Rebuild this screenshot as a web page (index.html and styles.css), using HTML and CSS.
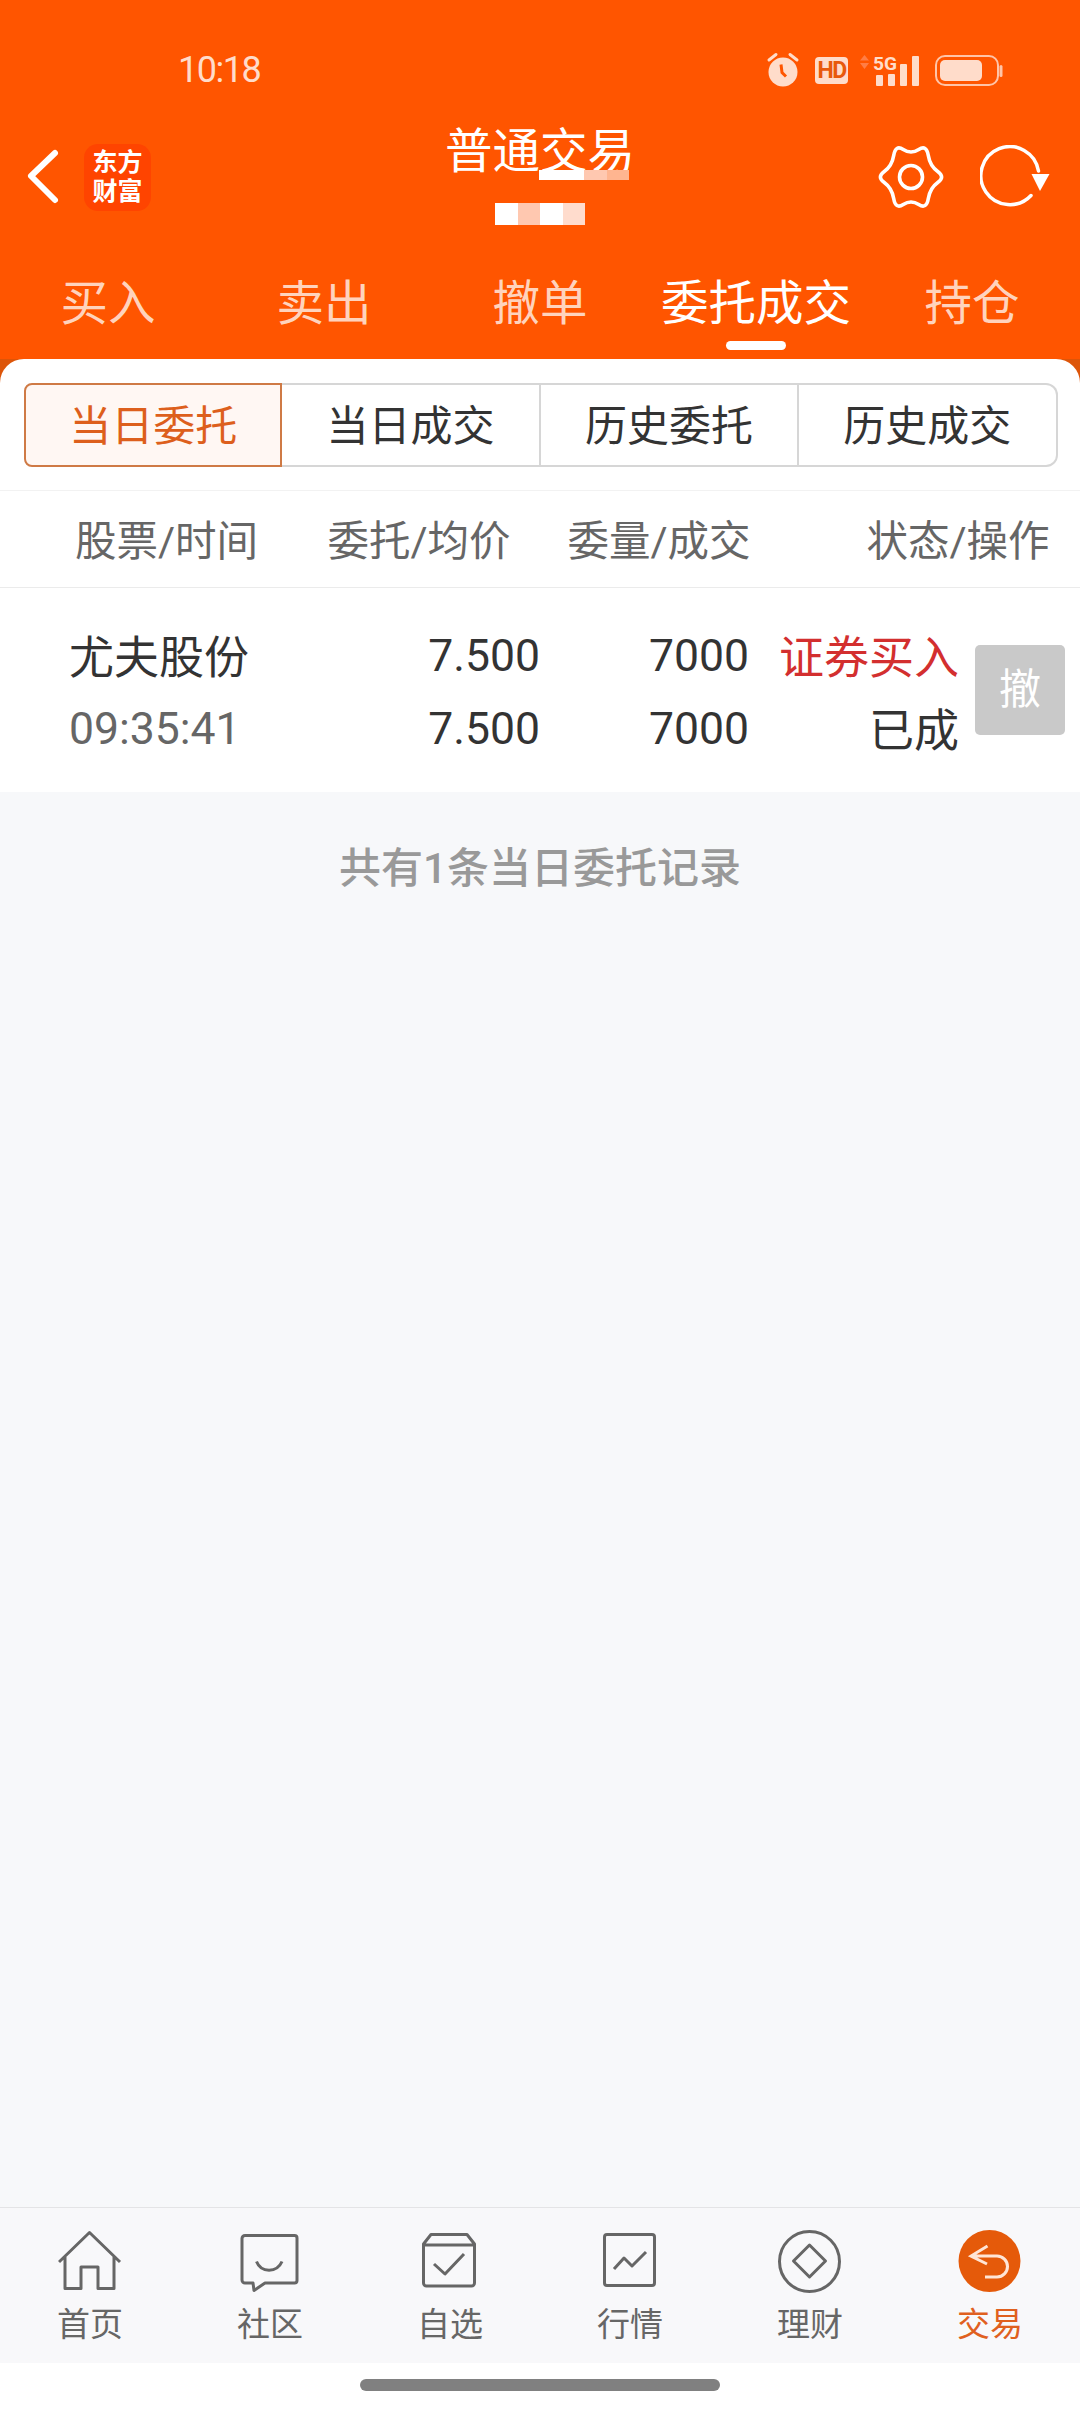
FILE: index.html
```html
<!DOCTYPE html>
<html>
<head>
    <title>普通交易</title>
    <link rel="stylesheet" href="styles.css">
</head>
<body>

<div class="top">
    <div class="status">
        <span class="time">10:18</span>
        <div class="statusIcons">
            <svg class="alarm" width="34" height="36" viewBox="0 0 34 36">
                <circle cx="17" cy="20" r="14.5" fill="#ffdcca"/>
                <path d="M3 8L10 2.5M31 8L24 2.5" stroke="#ffdcca" stroke-width="3" stroke-linecap="round"/>
                <path d="M15 12.5L16 20.5L20 24.5" fill="none" stroke="#ff5500" stroke-width="3"/>
            </svg>
            <span class="hd">HD</span>
            <svg width="60" height="33" viewBox="0 0 60 33">
                <path d="M4.5 1L9 6.5H0zM0 9H9L4.5 15z" fill="#ff7d45"/>
                <text class="fiveG" x="13" y="16" textLength="24" lengthAdjust="spacingAndGlyphs">5G</text>
                <g fill="#ffdcca">
                    <rect x="16" y="21" width="7" height="11" rx="1"/>
                    <rect x="28" y="20" width="7" height="12" rx="1"/>
                    <rect x="40" y="10" width="7" height="22" rx="1"/>
                    <rect x="52" y="2" width="7" height="30" rx="1"/>
                </g>
            </svg>
            <svg class="battery" width="68" height="31" viewBox="0 0 68 31">
                <rect x="1" y="1" width="62" height="29" rx="9" fill="none" stroke="#ffc4a8" stroke-width="2"/>
                <rect x="5" y="5" width="42" height="21" rx="5" fill="#ffdcca"/>
                <rect x="64.5" y="10" width="3" height="12" rx="1.5" fill="#ffc4a8"/>
            </svg>
        </div>
    </div>

    <div class="nav">
        <div class="navLeft">
            <svg width="36" height="60" viewBox="0 0 36 60">
                <path d="M31 6L7 29L31 53" fill="none" stroke="#fff" stroke-width="6" stroke-linecap="round" stroke-linejoin="round"/>
            </svg>
            <div class="logo">东方<br>财富</div>
        </div>

        <div class="navTitle">
            <div class="title">普通交易</div>
            <div class="mask titleMask">
                <i class="m1"></i><i class="m1"></i><i class="m3"></i><i class="m4"></i>
            </div>
            <div class="mask">
                <i class="m1"></i><i class="m3"></i><i class="m1"></i><i class="m2"></i>
            </div>
        </div>

        <div class="navRight">
            <svg width="68" height="68" viewBox="-2 -2 68 68">
                <path d="M58.75 26.5Q51 21 49.25 10.25Q47.5 -0.5 39.75 4.5Q32 9.500 24.25 4.5Q16.5 -0.5 14.75 10.25Q13 21 5.25 26.5Q-2.5 32 5.25 37.5Q13 43 14.75 53.75Q16.5 64.5 24.25 59.5Q32 54.5 39.75 59.5Q47.5 64.5 49.25 53.75Q51 43 58.75 37.5Q66.5 32 58.75 26.5Z" fill="none" stroke="#fff" stroke-width="3.6"/>
                <circle cx="32" cy="32" r="11.5" fill="none" stroke="#fff" stroke-width="3.6"/>
            </svg>
            <svg width="72" height="64" viewBox="0 0 72 64">
                <path d="M51 50.500A29 29 0 1 1 58.500 26" fill="none" stroke="#fff" stroke-width="3.5" stroke-linecap="round"/>
                <path d="M51.500 29H69.500L60 46z" fill="#fff"/>
            </svg>
        </div>
    </div>

    <div class="tabs">
        <div class="tab">买入</div>
        <div class="tab">卖出</div>
        <div class="tab">撤单</div>
        <div class="tab tabActive">委托成交<span class="tabBar"></span></div>
        <div class="tab">持仓</div>
    </div>
</div>

<div class="panelBack">
    <div class="panel">
        <div class="segments">
            <div class="seg segActive">当日委托</div>
            <div class="seg">当日成交</div>
            <div class="seg">历史委托</div>
            <div class="seg">历史成交</div>
        </div>

        <div class="tableHead">
            <span>股票/时间</span>
            <span class="right">委托/均价</span>
            <span class="right">委量/成交</span>
            <span class="right">状态/操作</span>
        </div>

        <div class="order">
            <span class="cjk">尤夫股份</span>
            <span class="right">7.500</span>
            <span class="right">7000</span>
            <span class="right red cjk">证券买入</span>
            <div class="cancel">撤</div>
            <span class="clock">09:35:41</span>
            <span class="right">7.500</span>
            <span class="right">7000</span>
            <span class="right cjk">已成</span>
        </div>
    </div>
</div>

<div class="note">共有1条当日委托记录</div>

<div class="bottomNav">
    <div class="navItem">
        <svg width="64" height="64" viewBox="0 0 64 64">
            <path d="M1 33L31.5 3.5L62 33M7 27V59.5H23V38H40V59.5H56V27" class="line"/>
        </svg>
        <span>首页</span>
    </div>
    <div class="navItem">
        <svg width="64" height="64" viewBox="0 0 64 64">
            <path d="M7 6.5H56.5a2.5 2.5 0 0 1 2.500 2.500V51.500a2.500 2.500 0 0 1-2.500 2.500H27L16 61.500L15 54H7a3 3 0 0 1-3-3V9.500a3 3 0 0 1 3-3z" class="line"/>
            <path d="M18.500 32.500C23 44 39 44 44 32.500" class="line"/>
        </svg>
        <span>社区</span>
    </div>
    <div class="navItem">
        <svg width="64" height="64" viewBox="0 0 64 64">
            <path d="M5.500 15L13 5.500H49L56.500 15V54a3 3 0 0 1-3 3H8.500a3 3 0 0 1-3-3zM5.500 16H56.500" class="line"/>
            <path d="M16 35L27 45L46 25" class="line"/>
        </svg>
        <span>自选</span>
    </div>
    <div class="navItem">
        <svg width="64" height="64" viewBox="0 0 64 64">
            <rect x="6.500" y="5.500" width="50" height="51" rx="2.500" class="line"/>
            <path d="M16 40L26 29L34 37L48 23" class="line"/>
        </svg>
        <span>行情</span>
    </div>
    <div class="navItem">
        <svg width="64" height="64" viewBox="0 0 64 64">
            <circle cx="31.500" cy="32.500" r="30" class="line"/>
            <path d="M31.500 16L47.500 32L31.500 48L15.500 32z" class="line"/>
        </svg>
        <span>理财</span>
    </div>
    <div class="navItem navActive">
        <svg width="64" height="64" viewBox="0 0 64 64">
            <circle cx="31.500" cy="32" r="31" fill="#e55a0a"/>
            <path d="M29.500 17L13 27L29 35M13 27H39a10.500 10.500 0 0 1 0 21H27" fill="none" stroke="#ffe5d5" stroke-width="3"/>
        </svg>
        <span>交易</span>
    </div>
</div>

<div class="homeArea">
    <div class="homeBar"></div>
</div>

</body>
</html>
```

FILE: styles.css
```css
body {
    margin: 0;
    height: 2412px;
    display: flex;
    flex-direction: column;
    overflow: hidden;
    background: #f7f8fa;
    color: #333;
    font-family: Roboto, "Noto Sans CJK SC", sans-serif;
}

/*---------Orange header-------------*/
.top {
    background: #ff5500;
    height: 359px;
    color: #fff;
}

.status {
    display: flex;
    justify-content: space-between;
    align-items: center;
    height: 36px;
    padding: 52px 77px 0 178px;
}

.time {
    font-size: 36px;
    letter-spacing: -1.5px;
    color: #ffdcca;
}

.statusIcons {
    display: flex;
    align-items: center;
    gap: 12px;
}

.statusIcons svg {
    display: block;
}

.alarm {
    margin-right: 3px;
}

.battery {
    margin-left: 3px;
}

.hd {
    width: 33px;
    height: 27px;
    line-height: 28px;
    text-align: center;
    background: #ffdcca;
    border-radius: 4px;
    color: #e8590c;
    font-size: 23px;
    font-weight: bold;
    letter-spacing: -1.5px;
}

.fiveG {
    font-size: 19px;
    font-weight: bold;
    fill: #ffdcca;
}

.nav {
    display: grid;
    grid-template-columns: 1fr auto 1fr;
    align-items: center;
    height: 96px;
    margin-top: 41px;
}

.navLeft {
    display: flex;
    align-items: center;
    gap: 24px;
    padding-left: 24px;
}

.logo {
    width: 67px;
    height: 67px;
    background: #ff4400;
    border-radius: 14px;
    text-align: center;
    font-size: 25px;
    font-weight: bold;
    line-height: 29px;
    padding-top: 4px;
    box-sizing: border-box;
}

.navTitle {
    position: relative;
    height: 96px;
    display: flex;
    flex-direction: column;
    align-items: center;
}

.title {
    font-size: 47.5px;
    height: 74px;
    line-height: 46px;
}

.mask {
    display: flex;
    height: 22px;
}

.mask i {
    width: 22.5px;
}

.titleMask {
    position: absolute;
    top: 41px;
    left: 94px;
    height: 10px;
}

.m1 { background: #fff; }
.m2 { background: #ffdccd; }
.m3 { background: #ffc8b0; }
.m4 { background: #ffb590; }

.navRight {
    display: flex;
    justify-content: flex-end;
    align-items: center;
    gap: 35px;
    padding-right: 28px;
}

.tabs {
    display: grid;
    grid-template-columns: repeat(5, 1fr);
    height: 134px;
}

.tab {
    display: flex;
    flex-direction: column;
    align-items: center;
    padding-top: 54px;
    font-size: 47.5px;
    line-height: 50px;
    color: #ffd3bd;
}

.tabActive {
    color: #fff;
}

.tabBar {
    width: 60px;
    height: 9px;
    margin-top: 12px;
    background: #fff;
    border-radius: 5px;
}

/*---------White panel-------------*/
.panelBack {
    background: #dd5509;
}

.panel {
    background: #fff;
    border-radius: 24px 24px 0 0;
    padding-top: 24px;
}

.segments {
    display: grid;
    grid-template-columns: repeat(4, 258.4px);
    margin: 0 24px 23px;
}

.seg {
    height: 84px;
    line-height: 84px;
    box-sizing: border-box;
    text-align: center;
    font-size: 42px;
    border: 2px solid #d6d6d6;
    border-left-width: 0;
}

.seg:first-child {
    border-radius: 8px 0 0 8px;
    border-left-width: 2px;
}

.seg:last-child {
    border-radius: 0 12px 12px 0;
}

.segActive {
    background: #fff7f3;
    border-color: #cf7a45;
    color: #dd5f1c;
}

.tableHead {
    display: grid;
    grid-template-columns: 241px 194.5px 240px 299px;
    align-items: center;
    height: 94px;
    padding: 0 0 2px 75px;
    border-top: 1px solid #f2f2f2;
    border-bottom: 1px solid #ebebeb;
    font-size: 41.5px;
    white-space: nowrap;
    color: #666;
}

.right {
    text-align: right;
}

.order {
    display: grid;
    grid-template-columns: 261px 210px 209px 210px 90px;
    grid-auto-rows: 73px;
    align-items: center;
    height: 204px;
    box-sizing: border-box;
    padding: 31px 0 0 69px;
    font-size: 44.5px;
    white-space: nowrap;
}

.cjk {
    margin-bottom: 3px;
    font-size: 45px;
}

.red {
    color: #d32f2f;
}

.clock {
    color: #666;
}

.cancel {
    grid-row: 1 / span 2;
    grid-column: 5;
    width: 90px;
    height: 90px;
    margin: 0 0 4px 16px;
    background: #c9c9c9;
    border-radius: 5px;
    color: #fff;
    font-size: 42px;
    line-height: 90px;
    text-align: center;
}

/*---------Note and bottom nav-------------*/
.note {
    flex-grow: 1;
    padding-top: 52px;
    text-align: center;
    font-size: 42px;
    font-weight: 500;
    line-height: 50px;
    color: #999;
}

.bottomNav {
    display: grid;
    grid-template-columns: repeat(6, 1fr);
    height: 155px;
    background: #f8f8fa;
    border-top: 1px solid #e4e4e6;
}

.navItem {
    display: flex;
    flex-direction: column;
    align-items: center;
    padding-top: 21px;
    font-size: 33px;
    line-height: 36px;
    color: #666;
}

.navItem span {
    margin-top: 14px;
}

.navActive {
    color: #e0601f;
}

.line {
    fill: none;
    stroke: #666;
    stroke-width: 3;
    stroke-linejoin: round;
}

.homeArea {
    height: 49px;
    background: #fff;
    padding-top: 16px;
    box-sizing: border-box;
}

.homeBar {
    width: 360px;
    height: 12px;
    margin: 0 auto;
    background: #808080;
    border-radius: 6px;
}
```
